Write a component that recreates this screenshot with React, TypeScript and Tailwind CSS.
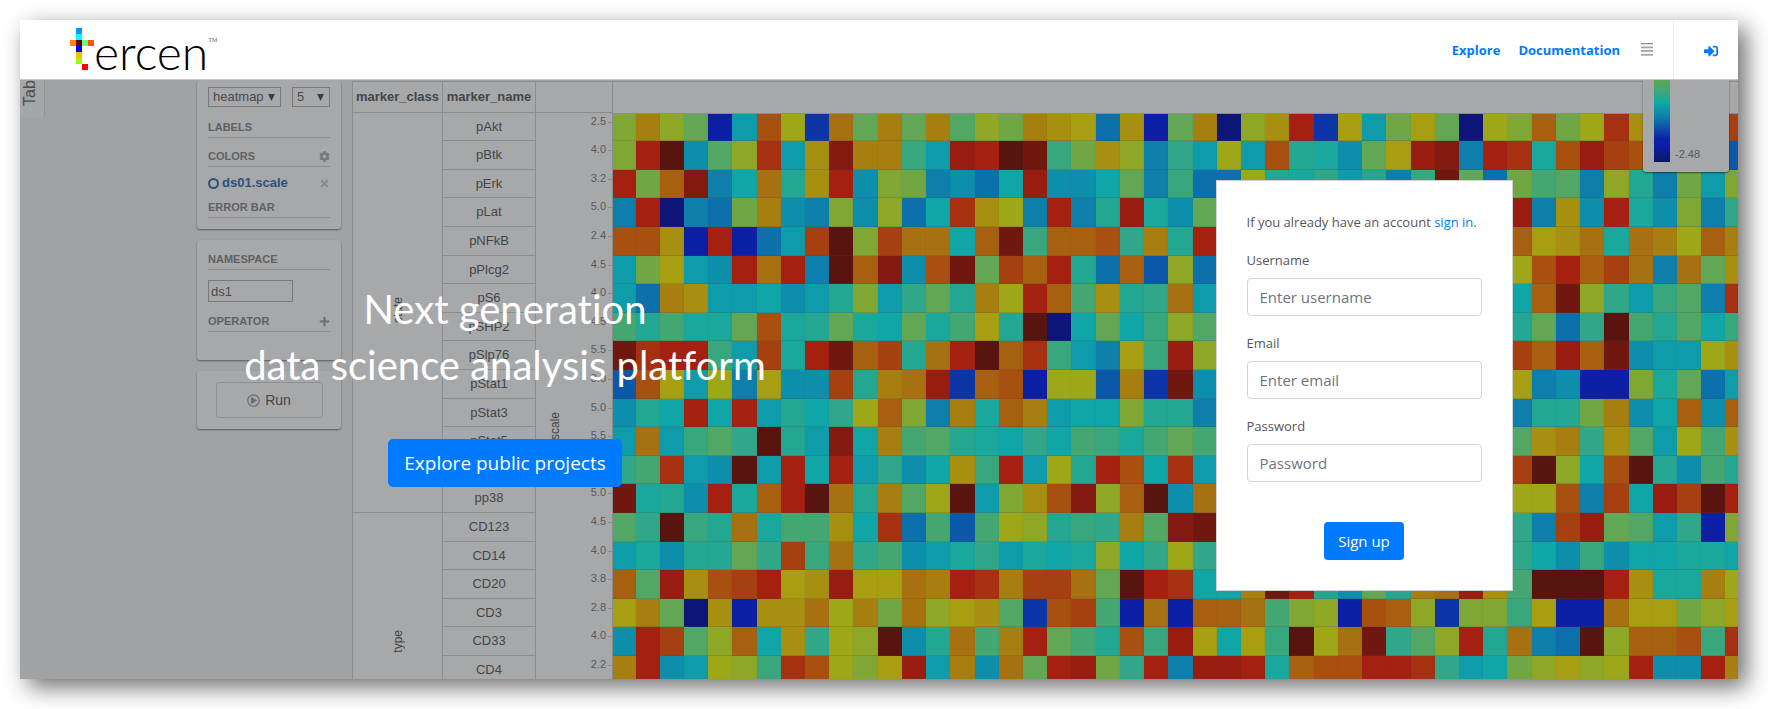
import { FaCog, FaPlus, FaRegPlayCircle, FaSignInAlt, FaTimes } from "react-icons/fa";

const PALETTE: Record<string, string> = {
  a: "#0d1578", b: "#0c1fa5", c: "#0e35a8", d: "#0c58a8", e: "#0c70aa", f: "#0d7faa",
  g: "#0d8eaa", h: "#0e9caa", i: "#10a6a8", j: "#1aa79c", k: "#24a792", l: "#2fa788",
  m: "#38a77e", n: "#44a772", o: "#52a765", p: "#62a755", q: "#70a744", r: "#80a733",
  s: "#8ea726", t: "#9ea717", u: "#a79f11", v: "#a78f10", w: "#a77f10", x: "#a77010",
  y: "#a76010", z: "#a75010", A: "#a74010", B: "#a73010", C: "#a52010", D: "#981c10",
  E: "#831a12", F: "#701810", G: "#5a1410",
};

type Marker = { name: string; axis: string; cells: string };

const MARKERS: Marker[] = [
  { name: "pAkt", axis: "2.5", cells: "rwspbhztcxpwpwosqwvuevbpwasvCcuhqupatryqtBvvuvA" },
  { name: "pBtk", axis: "4.0", cells: "rCGgosBhvEwwmhDCGFmqvsflhthzkjgpuDEfCBjzDAzzzzd" },
  { name: "pErk", axis: "3.2", cells: "CqyEfixkvCgrqfgeiDggipfmeetkjlhkfmFpeqnofskfqhr" },
  { name: "pLat", axis: "5.0", cells: "fCafeqwgfrgseiBvtfCfkDjgpknqgsvhklpwnDfvgCjgrfl" },
  { name: "pNFkB", axis: "2.4", cells: "zzvbCbehAGrAxxiyFmyyzlwkCxzwykpAuvxwyyuvxjxwtyw" },
  { name: "pPlcg2", axis: "4.5", cells: "hquhgCxCfGyEgzFpAyCkeydseghCktyepzfwutzCyAxfxpv" },
  { name: "pS6", axis: "4.0", cells: "hewvhhighkrhlpkwtCynvklxhhijklpkhgwnkiyFslhmofB" },
  { name: "pSHP2", axis: "4.5", cells: "nknjjpzjkpjipjnukGaipimsonkjippkjlmnpkpelGnkoim" },
  { name: "pSlp76", axis: "5.5", cells: "FBCCmhAjCFyAkxCGyBmhfumDsyCAFwhkCyzDuAyDyFghhtv" },
  { name: "pStat1", axis: "3.0", cells: "dzuhtfuggAkwxDcyzbttdwcFggfubwyhtkAzbufgbbrjpeh" },
  { name: "pStat3", axis: "5.0", cells: "gkiCiChkiltyrfwjywhiirkkfgikhlyCwjikgfkkqwgiygy" },
  { name: "pStat5", axis: "5.5", cells: "hxhmolGkhEiwnokjilinmjnpnklnohijmkxplovwlvohtnv" },
  { name: "", axis: "", cells: "lnBhgGhCiChlgivmChtkCziBhxkhiCGlnBhgtAGsizGkgnk" },
  { name: "pp38", axis: "5.0", cells: "FjkgCjyCGxkwotGhrvzEsyGgxFkhCyAjiwtGyttzfAiDAGC" },
  { name: "CD123", axis: "4.5", cells: "olGmkxjnnviBendntskmlwoEFlknmopkjBdnelfADpohlbr" },
  { name: "CD14", axis: "4.0", cells: "hjgkkplAmxlnghjlhjijsiltlkjhlgiklnjhkligmgiijji" },
  { name: "CD20", axis: "3.8", cells: "yoDvzACuvDuuxwCBwAAxpGCBiiwFCkgpkwxDvnGGGCvjjwt" },
  { name: "CD3", axis: "2.8", cells: "uwpavbvvxtwqxsuvoczAnbxbyyxnrsbzyscrrmubbxuuqsu" },
  { name: "CD33", axis: "4.0", cells: "gCAosyivltsGgkxnwCpnkzmDuiumGtxFlosCkxfeGsyyzmB" },
  { name: "CD4", axis: "2.2", cells: "wCghtsmBztruDhwgxpCDqlCfDDCjyzzCCBlhiqsustCggCw" },
];

const COLUMNS = 47;
const STATE_ROWS = 14;

const isShortRow = (row: number) => row % 5 === 0 || row % 5 === 2;
const rowTop = (row: number) => Math.floor((row * 143) / 5);
const colLeft = (col: number) => (col === 0 ? 0 : Math.round(22.5 + (col - 1) * 24.22));

function Heatmap() {
  const width = colLeft(COLUMNS);
  const height = rowTop(MARKERS.length);
  return (
    <svg width={width} height={height} shapeRendering="crispEdges" className="block max-w-none" aria-hidden="true">
      {MARKERS.map((marker, r) =>
        marker.cells.split("").map((key, c) => (
          <rect
            key={`${r}-${c}`}
            x={colLeft(c)}
            y={rowTop(r)}
            width={colLeft(c + 1) - colLeft(c)}
            height={rowTop(r + 1) - rowTop(r)}
            fill={PALETTE[key]}
          />
        )),
      )}
      {MARKERS.map((_, r) => (
        <rect key={`h${r}`} x={0} y={rowTop(r + 1) - 1} width={width} height={1} fill="#444" opacity={0.2} />
      ))}
      {Array.from({ length: COLUMNS }, (_, c) => (
        <rect key={`v${c}`} x={colLeft(c + 1) - 1} y={0} width={1} height={height} fill="#444" opacity={0.05} />
      ))}
      <rect x={0} y={0} width={width} height={1} fill="#8b8c8e" />
    </svg>
  );
}

function Logo() {
  return (
    <a href="#" aria-label="tercen" className="flex text-black">
      <svg width="24" height="42" viewBox="0 0 24 42" shapeRendering="crispEdges" className="mt-2" aria-hidden="true">
        <rect x="6" y="0" width="6" height="6" fill="#0099ff" />
        <rect x="6" y="6" width="6" height="6" fill="#00ffff" />
        <rect x="0" y="12" width="6" height="6" fill="#ff8800" />
        <rect x="6" y="12" width="6" height="6" fill="#660000" />
        <rect x="12" y="12" width="6" height="6" fill="#66ff88" />
        <rect x="18" y="12" width="6" height="6" fill="#ff5500" />
        <rect x="6" y="18" width="6" height="6" fill="#0000ff" />
        <rect x="6" y="24" width="6" height="6" fill="#ffbb00" />
        <rect x="6" y="30" width="6" height="6" fill="#99ff00" />
        <rect x="12" y="36" width="6" height="6" fill="#ff0000" />
      </svg>
      <span className="font-[Lato,sans-serif] text-[48px] leading-[64px] font-light">ercen</span>
      <span className="mt-4 font-['Liberation_Serif',serif] text-[6px] leading-2 text-[#7a5a50]">TM</span>
    </a>
  );
}

function Header() {
  return (
    <header className="flex h-[60px] items-stretch justify-between border-b border-[#c8c9ca] bg-white pl-[50px]">
      <Logo />
      <nav className="flex items-center text-[13px] font-bold text-[#007bff]">
        <a href="#explore" className="pt-[2px]">Explore</a>
        <a href="#documentation" className="ml-[18px] pt-[2px]">Documentation</a>
        <button type="button" aria-label="Menu" className="mr-5 ml-[21px]">
          <svg width="12" height="13" viewBox="0 0 12 13" aria-hidden="true" className="block">
            <rect x="0" y="0" width="12" height="1.3" fill="#8c8c8c" />
            <rect x="0" y="3.5" width="12" height="1.8" fill="#a6a6a6" />
            <rect x="0" y="7.2" width="12" height="1.4" fill="#8c8c8c" />
            <rect x="0" y="10.9" width="12" height="1.8" fill="#a6a6a6" />
          </svg>
        </button>
        <a
          href="#sign-in"
          aria-label="Sign in"
          className="flex items-center self-stretch border-l border-[#eeeeee] pt-[2px] pr-5 pl-[30px]"
        >
          <FaSignInAlt size={14} />
        </a>
      </nav>
    </header>
  );
}

const panel = "w-36 rounded-[3px] bg-[#a7a8aa] px-[11px] shadow-[0_1px_2px_rgba(0,0,0,0.45)]";

function SectionTitle({ children, icon }: { children: string; icon?: React.ReactNode }) {
  return (
    <h3 className="flex h-5 items-center justify-between border-b border-[#8d8e90] text-[11px] font-bold text-[#606163]">
      {children}
      {icon}
    </h3>
  );
}

function SmallSelect({ label, value, className }: { label: string; value: string; className: string }) {
  return (
    <span className={`grid items-center ${className}`}>
      <select
        aria-label={label}
        defaultValue={value}
        className="col-start-1 row-start-1 h-5 w-full appearance-none border border-[#78797b] bg-transparent pl-1 text-[13px] leading-4 text-[#4a4b4d]"
      >
        <option>{value}</option>
      </select>
      <svg
        width="7"
        height="7"
        viewBox="0 0 7 7"
        className="pointer-events-none col-start-1 row-start-1 mr-[6px] justify-self-end"
        aria-hidden="true"
      >
        <path d="M0 0H7L3.5 7Z" fill="#3f4042" />
      </svg>
    </span>
  );
}

function SidePanels() {
  return (
    <div className="flex flex-col gap-[11px]">
      <section className={`${panel} h-[149px] pt-[7px]`}>
        <div className="flex justify-between">
          <SmallSelect label="Chart type" value="heatmap" className="w-[73px]" />
          <SmallSelect label="Size" value="5" className="w-[38px]" />
        </div>
        <div className="mt-[11px]">
          <SectionTitle>LABELS</SectionTitle>
        </div>
        <div className="mt-[9px]">
          <SectionTitle icon={<FaCog size={11} color="#77787a" />}>COLORS</SectionTitle>
        </div>
        <div className="mt-[6px] flex h-5 items-center text-[13px] font-bold text-[#2c527c]">
          <span className="mr-[3px] size-[11px] rounded-full border-2 border-[#2c527c]" />
          ds01.scale
          <FaTimes size={11} color="#88898b" className="ml-auto" />
        </div>
        <div className="mt-[5px]">
          <SectionTitle>ERROR BAR</SectionTitle>
        </div>
      </section>
      <section className={`${panel} h-[120px] pt-[10px]`}>
        <SectionTitle>NAMESPACE</SectionTitle>
        <input
          aria-label="Namespace"
          defaultValue="ds1"
          className="mt-[10px] block h-[22px] w-[85px] border border-[#78797b] bg-transparent px-[2px] text-[13px] text-[#4a4b4d]"
        />
        <div className="mt-[10px]">
          <SectionTitle icon={<FaPlus size={11} color="#6c6d6f" />}>OPERATOR</SectionTitle>
        </div>
      </section>
      <section className={`${panel} h-[58px] pt-[11px]`}>
        <button
          type="button"
          className="mx-auto flex h-9 w-[107px] items-center justify-center gap-[5px] rounded-[3px] border border-[#8f9092] text-[14px] text-[#444547]"
        >
          <FaRegPlayCircle size={13} color="#6c6d6f" />
          Run
        </button>
      </section>
    </div>
  );
}

const line = "border-[#8b8c8e]";
const vertical = "inline-block rotate-180 [writing-mode:vertical-rl]";

function MarkerTable() {
  return (
    <table className="mt-px shrink-0 table-fixed border-separate border-spacing-0 bg-[#a7a8aa] text-[13px] text-[#444547]">
      <thead>
        <tr className="h-8">
          <th className={`w-[90px] border border-r-0 p-0 ${line}`}>marker_class</th>
          <th className={`w-[93px] border border-r-0 p-0 ${line}`}>marker_name</th>
          <th className={`w-[78px] border p-0 ${line}`} />
          <th className={`border-t p-0 ${line}`} />
        </tr>
      </thead>
      <tbody>
        {MARKERS.map((marker, r) => (
          <tr key={r} className={isShortRow(r) ? "h-7" : "h-[29px]"}>
            {r === 0 && (
              <td rowSpan={STATE_ROWS} className={`border-b border-l p-0 text-center align-middle text-[12px] ${line}`}>
                <span className={vertical}>state</span>
              </td>
            )}
            {r === STATE_ROWS && (
              <td
                rowSpan={MARKERS.length - STATE_ROWS}
                className={`border-l p-0 pt-[117px] text-center align-top text-[12px] ${line}`}
              >
                <span className={vertical}>type</span>
              </td>
            )}
            <td className={`border-b border-l p-0 text-center leading-4 ${line}`}>{marker.name}</td>
            {r === 0 && (
              <td rowSpan={MARKERS.length} className={`border-r border-l p-0 align-top ${line}`}>
                <div className="flex justify-between">
                  <span className={`${vertical} mt-[299px] ml-[11px] self-start text-[12px] leading-4`}>ds01.scale</span>
                  <ol>
                    {MARKERS.map((m, i) => (
                      <li
                        key={i}
                        className={`flex items-start justify-end gap-[2px] text-[11px] leading-4 text-[#58595b] ${
                          isShortRow(i) ? "h-7" : "h-[29px]"
                        }`}
                      >
                        {m.axis}
                        {m.axis && <span className="mt-[9px] h-px w-1 bg-[#8b8c8e]" />}
                      </li>
                    ))}
                  </ol>
                </div>
              </td>
            )}
            {r === 0 && (
              <td rowSpan={MARKERS.length} className="p-0 align-top">
                <Heatmap />
              </td>
            )}
          </tr>
        ))}
      </tbody>
    </table>
  );
}

function Backdrop() {
  return (
    <div className="absolute inset-0 flex items-start overflow-hidden bg-[#a1a2a4] font-['Liberation_Sans',Arial,sans-serif]">
      <div className="flex h-[37px] w-[25px] shrink-0 justify-center overflow-hidden border-r border-[#939496] bg-[#a5a6a8] text-[16px] leading-5 text-[#4a4b4d]">
        <span className="mr-1 h-[26px] rotate-180 [writing-mode:vertical-rl]">Tab</span>
      </div>
      <div className="mr-[11px] ml-[152px] shrink-0">
        <SidePanels />
      </div>
      <MarkerTable />
      <div className="absolute top-0 right-[9px] flex h-[92px] w-[86px] rounded-b-[3px] bg-[#a7a8aa] pl-[11px] text-[11px] text-[#58595b] shadow-[0_1px_2px_rgba(0,0,0,0.5)]">
        <div className="h-[82px] w-4 bg-[linear-gradient(#5ea750_0%,#44a772_12%,#10a8a8_28%,#0d80aa_45%,#0e1fa8_72%,#0e1fa8_80%,#0d1568_100%)]" />
        <span className="mt-[66px] ml-[5px] leading-4">-2.48</span>
      </div>
    </div>
  );
}

function Field({ id, label, type, placeholder }: { id: string; label: string; type: string; placeholder: string }) {
  return (
    <div className="mt-4">
      <label htmlFor={id} className="mb-[7px] block leading-[22px]">
        {label}
      </label>
      <input
        id={id}
        type={type}
        placeholder={placeholder}
        className="block h-[38px] w-full rounded border border-[#ced4da] px-3 text-[15px] text-[#495057] placeholder:text-[#6c757d]"
      />
    </div>
  );
}

function SignUpCard() {
  return (
    <form className="flex w-[297px] flex-col border border-[#ced4da] bg-white px-[30px] pt-[31px] pb-[30px] text-[13px] text-[#55565a]">
      <p className="leading-[21px] whitespace-nowrap">
        If you already have an account{" "}
        <a href="#sign-in" className="text-[#007bff]">
          sign in
        </a>
        .
      </p>
      <Field id="username" label="Username" type="text" placeholder="Enter username" />
      <Field id="email" label="Email" type="email" placeholder="Enter email" />
      <Field id="password" label="Password" type="password" placeholder="Password" />
      <button type="submit" className="mt-10 h-[38px] w-20 self-center rounded bg-[#007bff] text-[15px] text-white">
        Sign up
      </button>
    </form>
  );
}

export default function App() {
  return (
    <div className="bg-white pt-5 pr-[30px] pb-[30px] pl-5 font-['Open_Sans',sans-serif]">
      <div className="shadow-[8px_8px_22px_rgba(0,0,0,0.58)]">
        <Header />
        <main className="relative">
          <Backdrop />
          <div className="relative flex items-start pb-[88px]">
            <section className="flex w-1/2 flex-col items-center pt-[201px] pl-[111px]">
              <h1 className="text-center font-[Lato,sans-serif] text-[40px] leading-[56px] text-white [font-variant-ligatures:none]">
                Next generation
                <br />
                data science analysis platform
              </h1>
              <a
                href="#projects"
                className="mt-[46px] flex h-12 w-[234px] items-center justify-center rounded-[5px] bg-[#007bff] text-[19px] text-white"
              >
                Explore public projects
              </a>
            </section>
            <section className="flex w-1/2 justify-center pt-[100px] pl-[111px]">
              <SignUpCard />
            </section>
          </div>
        </main>
      </div>
    </div>
  );
}
